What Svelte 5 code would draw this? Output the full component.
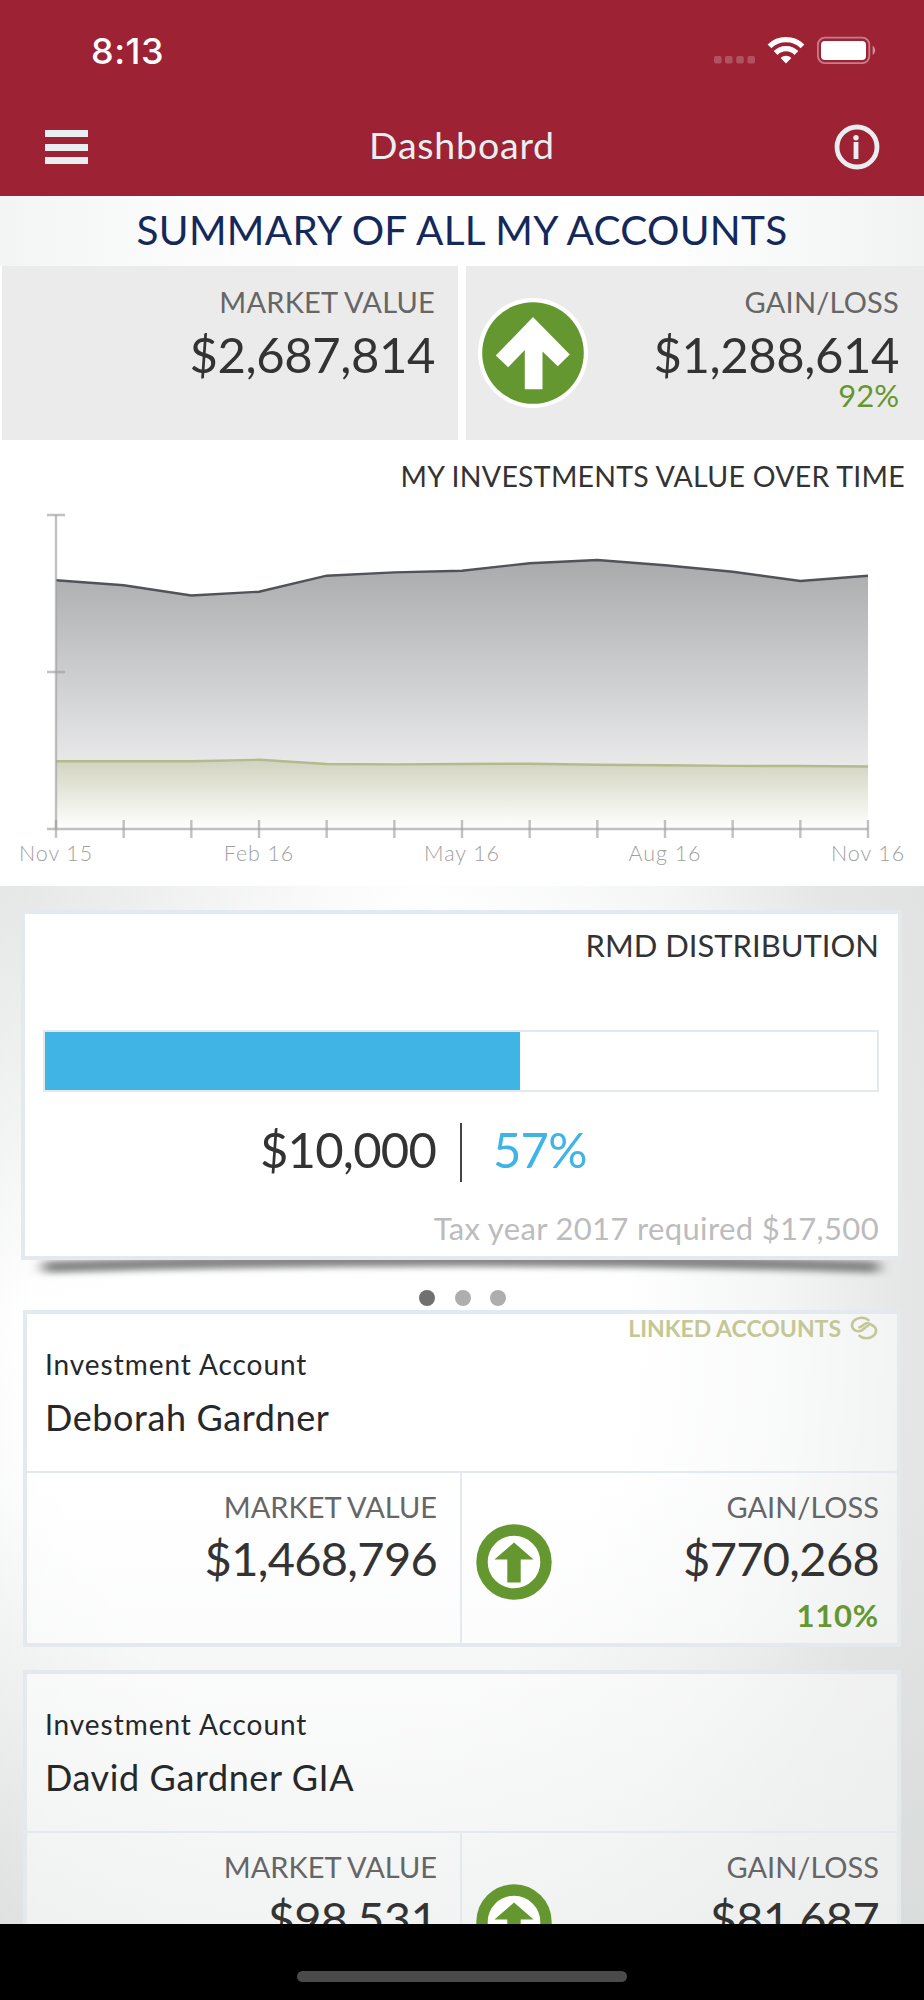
<script>
  const months = [
    { label: "Nov 15", invested: 580.3, cash: 761.3 },
    { label: "", invested: 585.3, cash: 761.3 },
    { label: "", invested: 595.5, cash: 761.3 },
    { label: "Feb 16", invested: 591.7, cash: 759.8 },
    { label: "", invested: 575.7, cash: 764 },
    { label: "", invested: 572.4, cash: 764.4 },
    { label: "May 16", invested: 570.7, cash: 764 },
    { label: "", invested: 563.2, cash: 763.7 },
    { label: "", invested: 560, cash: 764.8 },
    { label: "Aug 16", invested: 565.2, cash: 765.3 },
    { label: "", invested: 571.7, cash: 765.9 },
    { label: "", invested: 581, cash: 766 },
    { label: "Nov 16", invested: 575.7, cash: 766.5 },
  ];

  const left = 56;
  const right = 868;
  const base = 829;
  const x = (i) => left + (i * (right - left)) / (months.length - 1);

  const line = (key) => months.map((m, i) => `${x(i)},${m[key]}`).join(" ");
  const area = (key) => `${left},${base} ${line(key)} ${right},${base}`;

  const money = (n) => "$" + n.toLocaleString("en-US");

  const rmd = { amount: 10000, required: 17500, year: 2017 };
  const share = (rmd.amount / rmd.required) * 100;

  const accounts = [
    {
      type: "Investment Account",
      name: "Deborah Gardner",
      value: 1468796,
      gain: 770268,
      percent: "110%",
      linked: true,
    },
    {
      type: "Investment Account",
      name: "David Gardner GIA",
      value: 98531,
      gain: 81687,
      percent: "",
      linked: false,
    },
  ];

  let slide = $state(0);
</script>

<div class="screen">
  <header>
    <div class="status">
      <span class="time">8:13</span>
      <svg class="status-icons" width="166" height="32" viewBox="712 34 166 32">
        <g fill="#fff" fill-opacity="0.22">
          <rect x="714" y="56" width="7.6" height="7.4" rx="2" />
          <rect x="725" y="56" width="7.6" height="7.4" rx="2" />
          <rect x="736.2" y="56" width="7.6" height="7.4" rx="2" />
          <rect x="747.4" y="56" width="7.6" height="7.4" rx="2" />
        </g>
        <g fill="none" stroke="#fff" stroke-width="5.4">
          <path d="M769.5 46.4 A23.6 23.6 0 0 1 802.5 46.4" />
          <path d="M775.6 53 A14.6 14.6 0 0 1 796.4 53" />
        </g>
        <path d="M786 63.4 L780.6 58 A7.8 7.8 0 0 1 791.4 58 Z" fill="#fff" />
        <rect x="817.9" y="37.7" width="51.4" height="25.4" rx="7" fill="none" stroke="#fff" stroke-opacity="0.42" stroke-width="1.8" />
        <rect x="821" y="41" width="45" height="19" rx="4" fill="#fff" />
        <path d="M872.6 45.8 A5.4 5.4 0 0 1 872.6 55 Z" fill="#fff" fill-opacity="0.5" />
      </svg>
    </div>
    <div class="bar">
      <button class="menu" aria-label="Menu"><i></i><i></i><i></i></button>
      <h1>Dashboard</h1>
      <button class="info" aria-label="Info">
        <svg width="46" height="46" viewBox="0 0 46 46">
          <circle cx="23" cy="23" r="20" fill="none" stroke="#e9eef1" stroke-width="4.8" />
          <circle cx="22" cy="13.8" r="2.7" fill="#e9eef1" />
          <rect x="19.6" y="18" width="4.8" height="17" fill="#e9eef1" />
        </svg>
      </button>
    </div>
  </header>

  <h2>SUMMARY OF ALL MY ACCOUNTS</h2>

  <section class="totals">
    <div class="total">
      <div class="figures">
        <span class="label">MARKET VALUE</span>
        <span class="value">{money(2687814)}</span>
      </div>
    </div>
    <div class="total gain">
      <svg class="up" width="110" height="110" viewBox="0 0 110 110">
        <circle cx="55" cy="55" r="55" fill="#fff" />
        <circle cx="55" cy="55" r="50.8" fill="#659730" />
        <path d="M55 19 L91.8 56.5 L79.8 68.3 L64.5 53.6 V91.3 H46.8 V52 L30.2 69.2 L17.8 57.6 Z" fill="#fff" />
      </svg>
      <div class="figures">
        <span class="label">GAIN/LOSS</span>
        <span class="value">{money(1288614)}</span>
        <span class="percent">92%</span>
      </div>
    </div>
  </section>

  <section class="history">
    <h3>MY INVESTMENTS VALUE OVER TIME</h3>
    <svg width="924" height="393" viewBox="0 493 924 393">
      <defs>
        <linearGradient id="invested" gradientUnits="userSpaceOnUse" x1="0" y1="560" x2="0" y2="829">
          <stop offset="0" stop-color="#a9aaac" />
          <stop offset="1" stop-color="#fdfdfe" />
        </linearGradient>
        <linearGradient id="cash" gradientUnits="userSpaceOnUse" x1="0" y1="760" x2="0" y2="829">
          <stop offset="0" stop-color="#d1d3c0" />
          <stop offset="1" stop-color="#fff" />
        </linearGradient>
      </defs>

      <polygon points={area("invested")} fill="url(#invested)" />
      <polygon points={area("cash")} fill="url(#cash)" />
      <polyline points={line("invested")} fill="none" stroke="#505357" stroke-width="2.4" />
      <polyline points={line("cash")} fill="none" stroke="#b5ba8c" stroke-width="2.4" />

      <g stroke="#a0a0a0" stroke-opacity="0.65" stroke-width="2.4">
        <path d="M{left} 515 V{base}" />
        <path d="M47 515 H65 M47 672 H65" />
        <path d="M47 {base} H{right}" />
        {#each months as _, i}
          <path d="M{x(i)} 820 V838" />
        {/each}
      </g>
      {#each months as month, i}
        {#if month.label}
          <text x={x(i)} y="861" text-anchor="middle">{month.label}</text>
        {/if}
      {/each}
    </svg>
  </section>

  <main>
    <div class="rmd-wrap">
      <svg class="shadow" width="881" height="60" viewBox="0 0 881 60">
        <defs>
          <filter id="soft" x="-5%" y="-60%" width="110%" height="220%">
            <feGaussianBlur stdDeviation="7 3.2" />
          </filter>
        </defs>
        <path d="M22 21 L440 8 L858 21 V33 Q440 20 22 33 Z" fill="#858686" filter="url(#soft)" />
      </svg>
      <article class="rmd">
        <h4>RMD DISTRIBUTION</h4>
        <div class="track"><div class="fill" style="width: {share}%"></div></div>
        <div class="split">
          <span class="amount">{money(rmd.amount)}</span>
          <span class="share">{Math.round(share)}%</span>
        </div>
        <p>Tax year {rmd.year} required {money(rmd.required)}</p>
      </article>
    </div>

    <div class="dots">
      {#each [0, 1, 2] as n}
        <button class:active={slide === n} aria-label="Card {n + 1}" onclick={() => (slide = n)}></button>
      {/each}
    </div>

    {#each accounts as account}
      <article class="account">
        {#if account.linked}
          <div class="linked">
            <span>LINKED ACCOUNTS</span>
            <svg width="28" height="24" viewBox="0 0 28 24" fill="none" stroke="#c4c795" stroke-width="2.5" stroke-linecap="round">
              <path d="M18.6 4.2 C15 1 8.8 .8 4.8 4 C.4 7.6 1.4 12.8 5.6 14.6 C9 16 12 14.6 13.6 13 C15 11.6 16.4 10.2 18.4 9.6" />
              <path d="M9.4 19.8 C13 23 19.2 23.2 23.2 20 C27.6 16.4 26.6 11.2 22.4 9.4" />
              <path d="M9.2 11.4 C11.6 11 13 9.4 14.4 8.2 C16.4 6.8 19.6 7.4 22.4 9.4" />
            </svg>
          </div>
        {/if}
        <div class="owner">
          <span class="type">{account.type}</span>
          <span class="name">{account.name}</span>
        </div>
        <div class="numbers">
          <div class="figures">
            <span class="label">MARKET VALUE</span>
            <span class="value">{money(account.value)}</span>
          </div>
          <div class="result">
            <svg class="up" width="76" height="76" viewBox="0 0 76 76">
              <circle cx="38" cy="38" r="32" fill="#fff" stroke="#659730" stroke-width="11.4" />
              <path d="M38 18.4 L57.6 35.6 H44.7 V58.4 H31.3 V35.6 H18.4 Z" fill="#659730" />
            </svg>
            <div class="figures">
              <span class="label">GAIN/LOSS</span>
              <span class="value">{money(account.gain)}</span>
              <span class="percent">{account.percent}</span>
            </div>
          </div>
        </div>
      </article>
    {/each}
  </main>

  <footer><div class="home"></div></footer>
</div>

<style>
  :global(body) {
    background: #000;
  }
  .screen {
    width: 924px;
    height: 2000px;
    display: flex;
    flex-direction: column;
    overflow: hidden;
    background: #fff;
    color: #333;
    font-family: Lato, "Open Sans", sans-serif;
  }
  h1,
  h2,
  h3,
  h4,
  p {
    margin: 0;
    font-weight: 400;
  }
  button {
    padding: 0;
    border: none;
    background: none;
  }
  svg {
    display: block;
    flex: none;
  }

  header {
    height: 196px;
    flex: none;
    background: #9c2234;
    color: #e9eef1;
  }
  .status {
    height: 98px;
    display: flex;
    justify-content: space-between;
    padding: 0 46px 0 91px;
  }
  .time {
    margin-top: 30px;
    font: 500 36px/42px Inter, sans-serif;
    letter-spacing: 0.5px;
    color: #fff;
  }
  .status-icons {
    margin-top: 34px;
  }
  .bar {
    height: 98px;
    display: grid;
    grid-template-columns: 1fr auto 1fr;
    align-items: center;
    padding: 0 44px 0 45px;
  }
  h1 {
    margin: -4px 0 0 -1px;
    font-size: 37.5px;
    line-height: 46px;
    letter-spacing: 0.8px;
  }
  .menu {
    width: 43px;
    display: flex;
    flex-direction: column;
    gap: 6.5px;
  }
  .menu i {
    height: 7px;
    background: #e9eef1;
  }
  .info {
    justify-self: end;
  }

  h2 {
    height: 70px;
    flex: none;
    font-size: 40.5px;
    line-height: 68px;
    letter-spacing: 0.3px;
    text-align: center;
    color: #14295a;
    background: linear-gradient(90deg, #f3f5f5, #fdfdfd 25%, #fff 70%, #f1f3f3);
  }

  .totals {
    flex: none;
    height: 174px;
    display: grid;
    grid-template-columns: 456px 1fr;
    gap: 8px;
    padding-left: 2px;
  }
  .total {
    display: flex;
    justify-content: flex-end;
    padding: 19px 23px 0 12px;
    background: #ebebeb;
  }
  .total.gain {
    justify-content: space-between;
    padding-right: 25px;
  }
  .gain .up {
    margin-top: 13px;
  }
  .figures {
    display: flex;
    flex-direction: column;
    align-items: flex-end;
  }
  .label {
    font-size: 29px;
    line-height: 34px;
    letter-spacing: 0.2px;
    color: #666;
  }
  .value {
    margin-top: 5px;
    font-size: 49px;
    line-height: 60px;
    letter-spacing: -0.4px;
  }
  .percent {
    margin-top: -2px;
    font-size: 31px;
    line-height: 26px;
    color: #659730;
  }

  .history {
    flex: none;
    height: 446px;
    padding-top: 19px;
    box-sizing: border-box;
  }
  h3 {
    padding-right: 19px;
    font-size: 28.5px;
    line-height: 34px;
    letter-spacing: 0.25px;
    text-align: right;
  }
  .history text {
    font-size: 21.5px;
    font-weight: 300;
    letter-spacing: 0.9px;
    fill: #a0a0a0;
  }

  main {
    flex: none;
    height: 1038px;
    box-sizing: border-box;
    overflow: hidden;
    padding: 24px 23px 0;
    background:
      linear-gradient(rgba(212, 216, 215, 0) 58%, rgba(212, 216, 215, 0.5)),
      radial-gradient(circle 420px at 0 0, rgba(226, 228, 227, 0.8), rgba(226, 228, 227, 0)),
      radial-gradient(ellipse 700px 1000px at 330px 430px, #fff 42%, #f4f5f5 64%, #e5e7e6 82%, #dfe2e0 98%);
  }
  .rmd-wrap {
    position: relative;
    margin: 0 -1px 0 -2px;
  }
  .shadow {
    position: absolute;
    left: 0;
    bottom: -40px;
  }
  .rmd {
    position: relative;
    height: 350px;
    box-sizing: border-box;
    border: 4px solid #e3e9ed;
    padding: 13px 19px 0 18px;
    background: #fff;
  }
  h4 {
    font-size: 31px;
    line-height: 36px;
    text-align: right;
  }
  .track {
    height: 58px;
    margin-top: 67px;
    border: 2px solid #e3e9ed;
  }
  .fill {
    height: 100%;
    background: #41b4e6;
  }
  .split {
    height: 59px;
    margin-top: 31px;
    display: grid;
    grid-template-columns: 419px 1fr;
    font-size: 49px;
    line-height: 52px;
    letter-spacing: -0.8px;
  }
  .amount {
    padding-right: 24px;
    border-right: 2px solid #444;
    text-align: right;
  }
  .share {
    padding-left: 31px;
    color: #41b4e6;
  }
  .rmd p {
    margin-top: 28px;
    font-size: 31px;
    line-height: 36px;
    letter-spacing: 0.35px;
    text-align: right;
    color: #bcbcbc;
  }

  .dots {
    position: relative;
    display: flex;
    justify-content: center;
    gap: 19.5px;
    margin: 30px 0 4px 1px;
  }
  .dots button {
    width: 16px;
    height: 16px;
    border-radius: 50%;
    background: #aeaeae;
  }
  .dots button.active {
    background: #707070;
  }

  .account {
    position: relative;
    height: 337px;
    box-sizing: border-box;
    margin-bottom: 23px;
    border: 4.5px solid #e3e9ed;
    background: rgba(255, 255, 255, 0.5);
    background-clip: padding-box;
    display: flex;
    flex-direction: column;
  }
  .linked {
    position: absolute;
    top: 1px;
    right: 19px;
    display: flex;
    align-items: center;
    gap: 9px;
    color: #c4c795;
    font-size: 23px;
    line-height: 26px;
    font-weight: 700;
  }
  .owner {
    height: 157px;
    box-sizing: border-box;
    padding: 33px 18px 0;
    display: flex;
    flex-direction: column;
    color: #262829;
  }
  .type {
    font-size: 28px;
    line-height: 34px;
    letter-spacing: 0.95px;
  }
  .name {
    margin-top: 14px;
    font-size: 36px;
    line-height: 44px;
    letter-spacing: 0.6px;
  }
  .numbers {
    flex: 1;
    display: grid;
    grid-template-columns: 435px 1fr;
    border-top: 2px solid #e3e9ed;
  }
  .numbers > .figures {
    padding: 17px 23px 0 0;
    border-right: 2px solid #e3e9ed;
  }
  .numbers .label {
    letter-spacing: 0;
  }
  .numbers .value {
    margin-top: 6px;
    font-size: 47px;
    line-height: 56px;
    letter-spacing: -0.7px;
  }
  .numbers .percent {
    margin-top: 12px;
    line-height: 34px;
    font-weight: 700;
    letter-spacing: 0.8px;
  }
  .result {
    display: flex;
    justify-content: space-between;
    padding: 17px 18px 0 14px;
  }
  .result .up {
    margin-top: 34px;
  }

  footer {
    flex: 1;
    background: #000;
    display: flex;
    justify-content: center;
    align-items: flex-end;
  }
  .home {
    width: 330px;
    height: 11px;
    margin-bottom: 18px;
    border-radius: 6px;
    background: #4a4a4a;
  }
</style>
